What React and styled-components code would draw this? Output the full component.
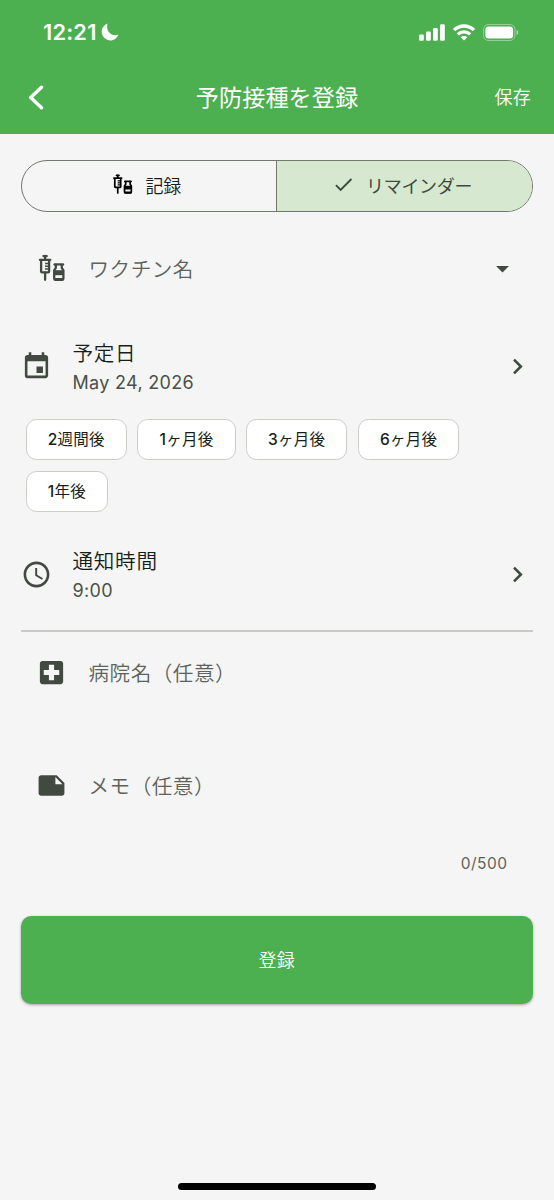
import React, { useState } from "react";
import styled, { createGlobalStyle } from "styled-components";
import {
  MdAccessTime,
  MdArrowDropDown,
  MdCheck,
  MdChevronRight,
  MdEvent,
  MdLocalHospital,
  MdNote,
} from "react-icons/md";

const GlobalStyle = createGlobalStyle`
  * {
    box-sizing: border-box;
  }

  body {
    margin: 0;
    background: #f5f5f5;
    font-family: Inter, "Noto Sans CJK JP", sans-serif;
    color: #181d18;
  }

  button {
    font-family: inherit;
    cursor: pointer;
  }
`;

const Screen = styled.div`
  display: flex;
  flex-direction: column;
  width: 554px;
  height: 1200px;
  background: #f5f5f5;
  overflow: hidden;
`;

const Header = styled.header`
  height: 133.5px;
  background: #4caf50;
  color: #ffffff;
`;

const StatusBar = styled.div`
  display: flex;
  justify-content: space-between;
  align-items: center;
  height: 62px;
  padding: 2px 35px 0 43px;
`;

const Clock = styled.div`
  display: flex;
  align-items: center;
  gap: 4px;
  font-size: 21.8px;
  font-weight: 600;
  letter-spacing: 0.2px;
`;

const StatusIcons = styled.div`
  display: flex;
  align-items: center;
  gap: 8px;
`;

const NavBar = styled.div`
  display: grid;
  grid-template-columns: 100px 1fr 100px;
  align-items: center;
  height: 71px;
`;

const BackButton = styled.button`
  display: flex;
  padding: 0 0 0 28px;
  border: none;
  background: none;
  color: inherit;
`;

const Title = styled.h1`
  margin: 0;
  font-size: 23.2px;
  font-weight: 400;
  line-height: 32px;
  text-align: center;
`;

const SaveButton = styled.button`
  padding: 0 23px 3px 0;
  border: none;
  background: none;
  color: inherit;
  font-size: 18px;
  font-weight: 350;
  letter-spacing: 0.3px;
  text-align: right;
`;

const Form = styled.main`
  flex: 1;
  display: flex;
  flex-direction: column;
  padding: 26px 21px 0 20.5px;
`;

const Segments = styled.div`
  display: flex;
  height: 52px;
  border: 1.3px solid #727970;
  border-radius: 26px;
  overflow: hidden;
`;

const Segment = styled.button`
  flex: 1;
  display: flex;
  justify-content: center;
  align-items: center;
  gap: 11px;
  padding: 0 5px 2px 0;
  border: none;
  border-left: ${(props) => (props.$divided ? "1px solid #727970" : "none")};
  background: ${(props) => (props.$active ? "#d6e8d0" : "transparent")};
  color: ${(props) => (props.$active ? "#3f4a3f" : "#181d18")};
  font-size: 18px;
  font-weight: ${(props) => (props.$active ? 400 : 350)};
  letter-spacing: ${(props) => (props.$active ? "-0.3px" : "0")};
`;

const Field = styled.div`
  display: flex;
  align-items: center;
  height: 31px;
  margin-top: ${(props) => props.$top}px;
  padding: 0 15.5px;
  color: #414941;
`;

const FieldLabel = styled.span`
  flex: 1;
  margin-left: 21.5px;
  padding-bottom: 1px;
  color: #5c635a;
  font-size: 20.6px;
  font-weight: 350;
  letter-spacing: 0.5px;
`;

const Row = styled.div`
  display: flex;
  align-items: center;
  height: 60px;
  margin-top: ${(props) => props.$top}px;
  color: #414941;
`;

const RowText = styled.div`
  flex: 1;
  margin-left: 21px;
`;

const RowTitle = styled.div`
  padding-top: 1px;
  color: #181d18;
  font-size: 20.6px;
  font-weight: 350;
  letter-spacing: 0.7px;
  line-height: 30px;
`;

const RowValue = styled.div`
  color: #4a5149;
  font-size: 18px;
  letter-spacing: 0.32px;
  line-height: 27px;
`;

const Chips = styled.div`
  display: flex;
  flex-wrap: wrap;
  gap: 11px 10.3px;
  margin-top: 22px;
  padding: 0 5px;
`;

const Chip = styled.button`
  height: 41px;
  padding: 1px 21.2px 0;
  border: 1.3px solid #cacdc5;
  border-radius: 10.5px;
  background: #ffffff;
  color: #181d18;
  font-size: 15.5px;
  font-weight: 400;
  letter-spacing: 0.25px;
  line-height: 20px;
`;

const ChipCount = styled.span`
  font-weight: 500;
`;

const Divider = styled.hr`
  width: 100%;
  height: 1.5px;
  margin: 25.5px 0 0;
  border: none;
  background: #c8cbc4;
`;

const Counter = styled.div`
  margin-top: 53px;
  padding-right: 25.5px;
  color: #5c635a;
  font-size: 15.5px;
  letter-spacing: 0.5px;
  line-height: 20px;
  text-align: right;
`;

const SubmitButton = styled.button`
  height: 88px;
  margin-top: 41.5px;
  padding: 0 0 2px;
  border: none;
  border-radius: 10.5px;
  background: #4caf50;
  box-shadow: 0 1px 3px rgba(0, 0, 0, 0.35);
  color: #ffffff;
  font-size: 18px;
  font-weight: 350;
  letter-spacing: 0.2px;
`;

const HomeIndicator = styled.div`
  width: 198px;
  height: 6.5px;
  margin: 0 auto 10.5px;
  border-radius: 4px;
  background: #000000;
`;

const intervals = [
  { count: 2, unit: "週間後" },
  { count: 1, unit: "ヶ月後" },
  { count: 3, unit: "ヶ月後" },
  { count: 6, unit: "ヶ月後" },
  { count: 1, unit: "年後" },
];

const MoonIcon = () => (
  <svg width="18" height="18" viewBox="0 0 18 18" fill="currentColor">
    <path d="M6.6 0.6A8.6 8.6 0 1 0 17.4 11.6C11.5 14 4.2 8.5 6.6 0.6Z" />
  </svg>
);

const SignalIcon = () => (
  <svg width="26" height="17" viewBox="0 0 26 17" fill="currentColor">
    <rect x="0" y="10.5" width="4.8" height="6.3" rx="1.3" />
    <rect x="7" y="7.6" width="4.8" height="9.2" rx="1.3" />
    <rect x="14" y="4" width="4.8" height="12.8" rx="1.3" />
    <rect x="21" y="0.2" width="4.8" height="16.6" rx="1.3" />
  </svg>
);

const WifiIcon = () => (
  <svg width="22" height="17" viewBox="0 0 22 17" fill="none" stroke="currentColor" strokeWidth="3.3">
    <path d="M1.1 6.1A14 14 0 0 1 20.9 6.1" />
    <path d="M4.8 10.4A8.7 8.7 0 0 1 17.2 10.4" />
    <path d="M11 16.5L7.6 13.3A4.8 4.8 0 0 1 14.4 13.3Z" fill="currentColor" stroke="none" />
  </svg>
);

const BatteryIcon = () => (
  <svg width="36" height="17" viewBox="0 0 36 17" fill="none">
    <rect x="0.5" y="0.5" width="31.5" height="16" rx="5" stroke="#ffffff" strokeOpacity="0.4" />
    <rect x="2.4" y="2.4" width="27.7" height="12.2" rx="3.3" fill="#ffffff" />
    <path d="M33.5 6V11C35.8 10 35.8 7 33.5 6Z" fill="#ffffff" fillOpacity="0.5" />
  </svg>
);

const BackIcon = () => (
  <svg width="17" height="26" viewBox="0 0 17 26" fill="none">
    <path
      d="M13.5 2.2L2.7 12.5L13.5 22.8"
      stroke="currentColor"
      strokeWidth="3.4"
      strokeLinecap="round"
      strokeLinejoin="round"
    />
  </svg>
);

const VaccineIcon = ({ size, color = "currentColor" }) => (
  <svg width={size} height={size} viewBox="0 0 31 31" fill="none" stroke={color} strokeWidth="2.3">
    {/* syringe */}
    <path d="M7.4 3.1H10.8M9.1 3V7M3.9 6.8H14.3" strokeLinecap="round" />
    <path d="M5.1 7V18.6Q5.1 19.4 5.9 19.4H12.3Q13.1 19.4 13.1 18.6V7" />
    <path d="M9 10.6H13M9 13.3H13M9 16H13" strokeWidth="1.5" />
    <path d="M9.1 19.6V26.8" strokeLinecap="round" />
    {/* vial */}
    <path d="M18.6 11.4H27" strokeWidth="2.4" strokeLinecap="round" />
    <path d="M19.8 12V15L18.2 17.4V25.6Q18.2 26.8 19.4 26.8H26.2Q27.4 26.8 27.4 25.6V17.4L25.8 15V12" />
    <path d="M18.2 17.2H27.4V22.2H18.2Z" fill={color} stroke="none" />
    <path d="M18.2 26.3H27.4" strokeWidth="2.6" />
  </svg>
);

export default function App() {
  const [mode, setMode] = useState("reminder");

  return (
    <>
      <GlobalStyle />
      <Screen>
        <Header>
          <StatusBar>
            <Clock>
              12:21
              <MoonIcon />
            </Clock>
            <StatusIcons>
              <SignalIcon />
              <WifiIcon />
              <BatteryIcon />
            </StatusIcons>
          </StatusBar>
          <NavBar>
            <BackButton>
              <BackIcon />
            </BackButton>
            <Title>予防接種を登録</Title>
            <SaveButton>保存</SaveButton>
          </NavBar>
        </Header>
        <Form>
          <Segments>
            <Segment $active={mode === "record"} onClick={() => setMode("record")}>
              {mode === "record" ? <MdCheck size={23} /> : <VaccineIcon size={23} color="#000000" />}
              記録
            </Segment>
            <Segment $divided $active={mode === "reminder"} onClick={() => setMode("reminder")}>
              {mode === "reminder" && <MdCheck size={23} />}
              リマインダー
            </Segment>
          </Segments>
          <Field $top={41}>
            <VaccineIcon size={31} />
            <FieldLabel>ワクチン名</FieldLabel>
            <MdArrowDropDown size={31} />
          </Field>
          <Row $top={53}>
            <MdEvent size={31} />
            <RowText>
              <RowTitle>予定日</RowTitle>
              <RowValue>May 24, 2026</RowValue>
            </RowText>
            <MdChevronRight size={31} />
          </Row>
          <Chips>
            {intervals.map(({ count, unit }) => (
              <Chip key={count + unit}>
                <ChipCount>{count}</ChipCount>
                {unit}
              </Chip>
            ))}
          </Chips>
          <Row $top={33}>
            <MdAccessTime size={31} />
            <RowText>
              <RowTitle>通知時間</RowTitle>
              <RowValue>9:00</RowValue>
            </RowText>
            <MdChevronRight size={31} />
          </Row>
          <Divider />
          <Field $top={25}>
            <MdLocalHospital size={31} />
            <FieldLabel>病院名（任意）</FieldLabel>
          </Field>
          <Field $top={82.5}>
            <MdNote size={31} />
            <FieldLabel>メモ（任意）</FieldLabel>
          </Field>
          <Counter>0/500</Counter>
          <SubmitButton>登録</SubmitButton>
        </Form>
        <HomeIndicator />
      </Screen>
    </>
  );
}
